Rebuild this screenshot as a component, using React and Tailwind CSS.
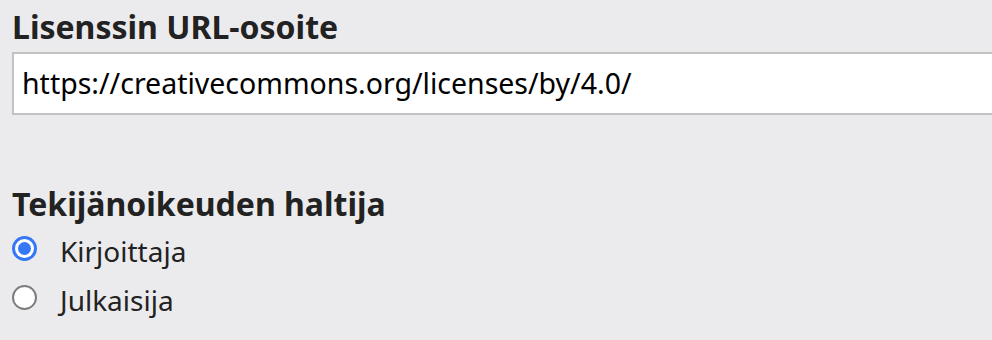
import React from "react";

function Radio({ checked }) {
  return checked ? (
    <span className="flex h-[25px] w-[25px] shrink-0 items-center justify-center rounded-full bg-[#3478f6]">
      <span className="flex h-[19px] w-[19px] items-center justify-center rounded-full bg-white">
        <span className="h-[13px] w-[13px] rounded-full bg-[#3478f6]" />
      </span>
    </span>
  ) : (
    <span className="h-[25px] w-[25px] shrink-0 rounded-full border-2 border-[#7d7d7d] bg-white" />
  );
}

export default function App() {
  return (
    <div
      className="h-[340px] w-[992px] overflow-hidden bg-[#ebebed] pl-[12px] pt-[7px] text-[#222]"
      style={{ fontFamily: '"Noto Sans", "Open Sans", sans-serif' }}
    >
      <div className="text-[32px] font-bold leading-[40px]">Lisenssin URL-osoite</div>
      <div className="mt-[5px] flex h-[63px] w-[1000px] items-center border-2 border-[#c2c2c2] bg-white pl-[8px] text-[28.5px] text-black">
        https://creativecommons.org/licenses/by/4.0/
      </div>
      <div className="mt-[69px] text-[32px] font-bold leading-[40px]">Tekijänoikeuden haltija</div>
      <div className="mt-[12px] flex flex-col gap-[20px]">
        <label className="flex items-start gap-[23px] text-[28px] leading-[28px]">
          <Radio checked />
          <span className="mt-[1px]">Kirjoittaja</span>
        </label>
        <label className="flex items-start gap-[23px] text-[28px] leading-[28px]">
          <Radio />
          <span className="mt-[1px]">Julkaisija</span>
        </label>
      </div>
    </div>
  );
}
